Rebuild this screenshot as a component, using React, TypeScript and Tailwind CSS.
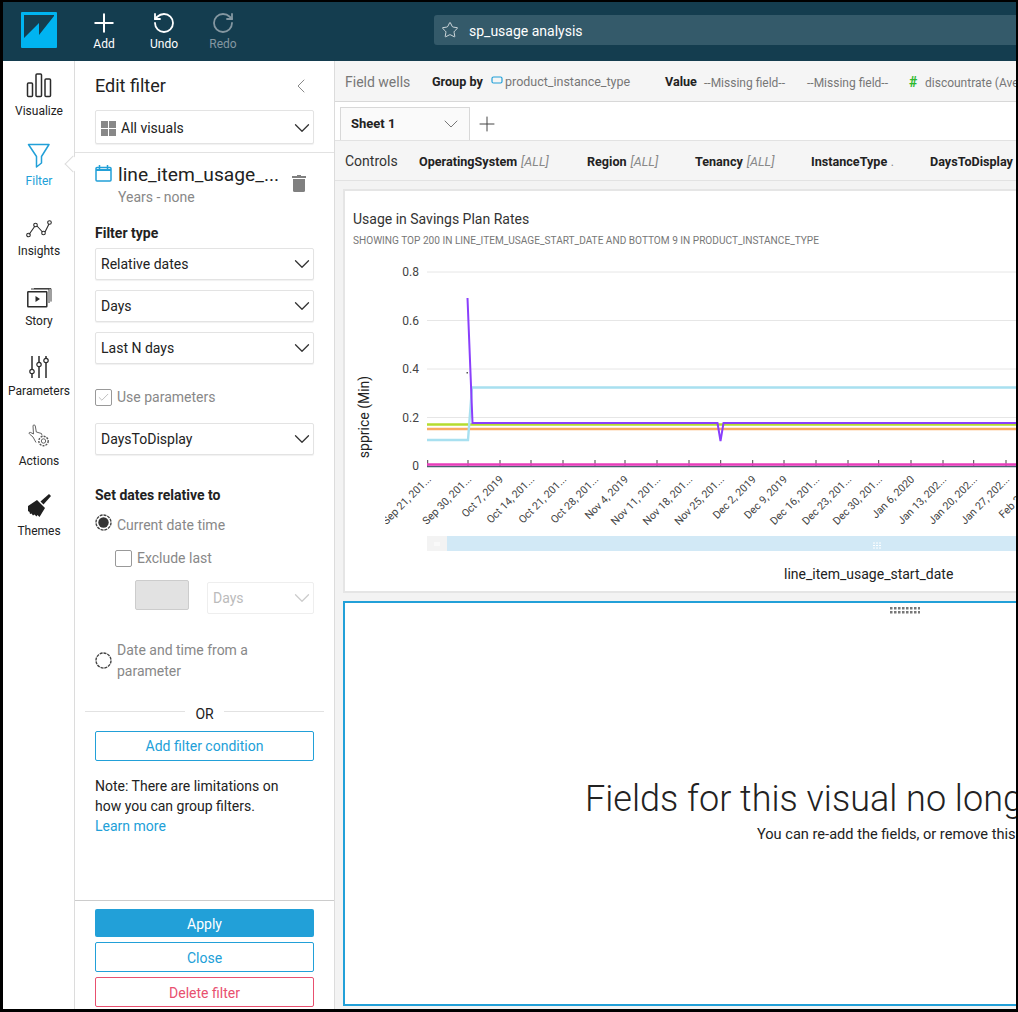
import { ChevronDown, ChevronLeft, Plus, RotateCcw, RotateCw, Star, Check } from 'lucide-react'

const FONT = 'font-[Roboto,"Noto_Sans",sans-serif]'

const ticks = [427.7, 468, 500, 531, 563, 595, 625, 657, 689, 720.7, 752.7, 784, 816, 848, 878.7, 911, 943, 973.7, 1006]
const dates = [
  'Sep 21, 201...', 'Sep 30, 201...', 'Oct 7, 2019', 'Oct 14, 201...', 'Oct 21, 201...', 'Oct 28, 201...', 'Nov 4, 2019',
  'Nov 11, 201...', 'Nov 18, 201...', 'Nov 25, 201...', 'Dec 2, 2019', 'Dec 9, 2019', 'Dec 16, 201...', 'Dec 23, 201...',
  'Dec 30, 201...', 'Jan 6, 2020', 'Jan 13, 202...', 'Jan 20, 202...', 'Jan 27, 202...', 'Feb 3, 2020',
]
const grid = [
  { y: 272, label: '0.8' },
  { y: 320.5, label: '0.6' },
  { y: 369, label: '0.4' },
  { y: 417.5, label: '0.2' },
]

function Logo() {
  return (
    <svg width="36" height="36" viewBox="0 0 36 36">
      <rect width="36" height="36" rx="1" fill="#00b4f1" />
      <path d="M3 3H33V4L18 23V11L3 26Z" fill="#143d4f" />
    </svg>
  )
}

function VisualizeIcon() {
  return (
    <svg width="26" height="25" viewBox="0 0 26 25" fill="none" stroke="#2b2b2b" strokeWidth="1.5">
      <rect x="1.5" y="10" width="5" height="13.5" rx="1" />
      <rect x="10" y="1" width="5.5" height="22.5" rx="1" />
      <rect x="19" y="6" width="5.5" height="17.5" rx="1" />
    </svg>
  )
}

function FilterIcon() {
  return (
    <svg width="24" height="25" viewBox="0 0 24 25" fill="none" stroke="#22a0d8" strokeWidth="1.5" strokeLinejoin="round">
      <path d="M1.5 1.5h20.5l-7.5 12v6.5l-5 4v-10.500z" />
    </svg>
  )
}

function InsightsIcon() {
  return (
    <svg width="26" height="18" viewBox="0 0 26 18" fill="none" stroke="#2b2b2b" strokeWidth="1.1">
      <path d="M3 14.500L9 6M11 6l5.500 6M19 12l4-8" />
      <circle cx="2.500" cy="15" r="1.800" />
      <circle cx="9.500" cy="5" r="1.800" />
      <circle cx="17.500" cy="13" r="1.800" />
      <circle cx="23.500" cy="2.500" r="1.800" />
    </svg>
  )
}

function StoryIcon() {
  return (
    <svg width="25" height="20" viewBox="0 0 25 20" fill="none" stroke="#2b2b2b" strokeWidth="1.3">
      <rect x="0.800" y="3.800" width="19" height="15" rx="0.500" strokeWidth="1.500" />
      <path d="M4 1h18v14M7 0.600h17v13" strokeWidth="0.900" />
      <path d="M8.500 8l4.500 3-4.500 3z" fill="#2b2b2b" stroke="none" />
    </svg>
  )
}

function ParametersIcon() {
  return (
    <svg width="20" height="23" viewBox="0 0 20 23" fill="none" stroke="#2b2b2b" strokeWidth="1.500">
      <path d="M3 1v13M3 19v4M10 1v6M10 12v11M17 1v2M17 8v15" />
      <circle cx="3" cy="16.500" r="2.200" strokeWidth="1.200" />
      <circle cx="10" cy="9.500" r="2.200" strokeWidth="1.200" />
      <circle cx="17" cy="5.500" r="2.200" strokeWidth="1.200" />
    </svg>
  )
}

function ActionsIcon() {
  return (
    <svg width="22" height="24" viewBox="0 0 22 24" fill="none" stroke="#555" strokeWidth="0.900">
      <path d="M5 13l-3.500-3c-1-1 0-2.200 1.200-1.500L5.500 10 5 2c0-1.500 2-1.500 2.300 0l1 6 5.200 1.500.5 2M5 13l3 5.500" />
      <circle cx="15.500" cy="17" r="4.700" strokeWidth="1.400" strokeDasharray="2 1.100" />
      <circle cx="15.500" cy="17" r="2.200" />
    </svg>
  )
}

function ThemesIcon() {
  return (
    <svg width="25" height="25" viewBox="0 0 25 25" fill="#1f1f1f">
      <path d="M22 1L24 3L16.500 11.500L13.500 8.500Z" />
      <path d="M10 7L18 15L12.500 24L10.500 22L9.500 23.500L7.500 21.500L6 22.500L4.500 20.500L3 21L2.500 19L1 18L1 13Z" />
    </svg>
  )
}

function TrashIcon() {
  return (
    <svg width="14" height="17" viewBox="0 0 14 17" fill="#808080" className="flex-none">
      <path d="M5 0h4v1h5v2H0V1h5z" />
      <path d="M1 4h12v11.500q0 1.500-1.500 1.500h-9Q1 17 1 15.500z" />
    </svg>
  )
}

function Radio({ on }: { on?: boolean }) {
  return (
    <svg width="17" height="17" viewBox="0 0 17 17" className="flex-none">
      <circle cx="8.500" cy="8.500" r="7.500" fill="none" stroke="#444" strokeWidth="1.400" strokeDasharray="3 0.900" />
      {on && <circle cx="8.500" cy="8.500" r="5.200" fill="#333" />}
    </svg>
  )
}

function RailItem({ icon, label, active }: { icon: React.ReactNode; label: string; active?: boolean }) {
  return (
    <div className="relative flex h-[70px] flex-col items-center pl-[1px]">
      <div className="flex h-[38px] items-end justify-center pb-[1px]">{icon}</div>
      <span className={`mt-[4px] text-[12px] leading-[16px] ${active ? 'text-[#22a0d8]' : 'text-[#222]'}`}>{label}</span>
    </div>
  )
}

function Select({ label, className = '', icon }: { label: string; className?: string; icon?: React.ReactNode }) {
  return (
    <div className={`flex items-center justify-between rounded-[2px] border border-[#e3e3e3] bg-white pl-[5px] text-[14px] text-[#222] shadow-[0_1px_1px_rgba(0,0,0,0.06)] ${className}`}>
      <span className="flex items-center gap-[5px]">
        {icon}
        {label}
      </span>
      <ChevronDown size={26} strokeWidth={1.2} className="-mr-[2px] flex-none text-[#333]" />
    </div>
  )
}

function Box({ className = '', children }: { className?: string; children?: React.ReactNode }) {
  return <div className={`flex-none rounded-[2px] ${className}`}>{children}</div>
}

function Panel() {
  return (
    <div className="flex w-[261px] flex-none flex-col border-l border-r border-[#dcdcdc] bg-white text-[14px]">
      <div className="flex h-[92px] flex-none flex-col border-b border-[#e2e2e2] px-5">
        <div className="flex h-[49px] flex-none items-center justify-between">
          <span className="text-[18px] text-[#222]">Edit filter</span>
          <ChevronLeft size={24} strokeWidth={1} className="mr-[1px] text-[#888]" />
        </div>
        <Select
          label="All visuals"
          className="h-[34px] pt-[2px]"
          icon={
            <span className="grid grid-cols-2 gap-[1px]">
              <i className="h-[7px] w-[7px] bg-[#888]" />
              <i className="h-[7px] w-[7px] bg-[#888]" />
              <i className="h-[7px] w-[7px] bg-[#888]" />
              <i className="h-[7px] w-[7px] bg-[#888]" />
            </span>
          }
        />
      </div>
      <div className="flex flex-1 flex-col px-5">
        <div className="mt-[11px] flex h-[22px] items-center">
          <svg width="17" height="17" viewBox="0 0 17 17" fill="none" stroke="#22a0d8" strokeWidth="1.500" className="-mt-[3px] flex-none">
            <rect x="1" y="2.500" width="15" height="13.500" rx="1" />
            <path d="M1 5h15" strokeWidth="2" />
            <path d="M4.500 0v4M12.500 0v4" />
          </svg>
          <span className="ml-[6px] mt-[1px] w-[160px] flex-none whitespace-nowrap text-[19.2px] text-[#222]">line_item_usage_...</span>
          <span className="ml-[14px] mt-[16px]"><TrashIcon /></span>
        </div>
        <div className="ml-[23px] mt-[1px] h-[20px] leading-[20px] text-[#888]">Years - none</div>
        <div className="mt-[16px] h-[20px] font-bold leading-[20px] text-[#222]">Filter type</div>
        <Select label="Relative dates" className="mt-[5px] h-[32px] flex-none" />
        <Select label="Days" className="mt-[10px] h-[32px] flex-none" />
        <Select label="Last N days" className="mt-[10px] h-[32px] flex-none" />
        <div className="mt-[25px] flex h-[17px] items-center">
          <Box className="flex h-[17px] w-[17px] items-center justify-center border border-[#999]">
            <Check size={13} strokeWidth={1} className="text-[#888]" />
          </Box>
          <span className="ml-[5px] -mt-[1px] text-[#888]">Use parameters</span>
        </div>
        <Select label="DaysToDisplay" className="mt-[17px] h-[32px] flex-none" />
        <div className="mt-[30px] h-[20px] font-bold leading-[20px] text-[#222]">Set dates relative to</div>
        <div className="mt-[9px] flex h-[17px] items-center">
          <Radio on />
          <span className="ml-[5px] mt-[6px] text-[#888]">Current date time</span>
        </div>
        <div className="ml-[20px] mt-[19px] flex h-[17px] items-center">
          <Box className="h-[17px] w-[17px] border border-[#999]" />
          <span className="ml-[5px] -mt-[1px] text-[#888]">Exclude last</span>
        </div>
        <div className="mt-[13px] flex h-[34px] items-start">
          <Box className="ml-[40px] h-[30px] w-[54px] border border-[#ccc] bg-[#e2e2e2]" />
          <div className="ml-[18px] mt-[2px] flex h-[32px] w-[107px] items-center justify-between rounded-[2px] border border-[#eee] pl-[5px] text-[#bbb]">
            Days
            <ChevronDown size={26} strokeWidth={1.2} className="-mr-[2px] flex-none text-[#ccc]" />
          </div>
        </div>
        <div className="mt-[26px] flex h-[41px] items-center">
          <Radio />
          <span className="ml-[5px] leading-[20.500px] text-[#888]">
            Date and time from a
            <br />
            parameter
          </span>
        </div>
        <div className="-mx-[10px] mt-[23px] flex h-[20px] items-center">
          <span className="-mt-[6px] h-px flex-1 bg-[#e2e2e2]" />
          <span className="mx-[10px] text-[#222]">OR</span>
          <span className="-mt-[6px] h-px flex-1 bg-[#e2e2e2]" />
        </div>
        <div className="mt-[7px] flex h-[30px] flex-none items-center justify-center rounded-[2px] border border-[#22a0d8] text-[#22a0d8]">
          Add filter condition
        </div>
        <div className="mt-[15px] leading-[20px] text-[#222]">
          Note: There are limitations on
          <br />
          how you can group filters.
          <br />
          <span className="text-[#22a0d8]">Learn more</span>
        </div>
      </div>
      <div className="flex h-[109px] flex-none flex-col border-t border-[#ccc] px-5 pt-[8px]">
        <div className="flex h-[28px] flex-none items-center justify-center rounded-[2px] bg-[#22a0d8] pt-[2px] text-white">Apply</div>
        <div className="mt-[5px] flex h-[30px] flex-none items-center justify-center rounded-[2px] border border-[#22a0d8] pt-[2px] text-[#22a0d8]">Close</div>
        <div className="mt-[5px] flex h-[30px] flex-none items-center justify-center rounded-[2px] border border-[#e8506f] pt-[2px] text-[#e8506f]">Delete filter</div>
      </div>
    </div>
  )
}

function ControlChip({ name, value, className }: { name: string; value: string; className: string }) {
  return (
    <span className={`flex-none whitespace-nowrap text-[12.6px] ${className}`}>
      <b className="font-bold text-[#222]">{name}</b>
      <i className="ml-[4px] text-[#888]">{value}</i>
    </span>
  )
}

function Chart() {
  return (
    <svg width="700" height="335" viewBox="345 255 700 335" className="mt-2 block" fontFamily="Roboto, sans-serif">
      <defs>
        <clipPath id="labels">
          <rect x="385" y="470" width="660" height="70" />
        </clipPath>
      </defs>
      {grid.map(g => (
        <g key={g.y}>
          <line x1="427" x2="1045" y1={g.y} y2={g.y} stroke="#e6e6e6" strokeWidth="1" />
          <text x="419" y={g.y + 4} textAnchor="end" fontSize="12" fill="#444">{g.label}</text>
        </g>
      ))}
      <text x="419" y="470" textAnchor="end" fontSize="12" fill="#444">0</text>
      <text transform="translate(369 417) rotate(-90)" textAnchor="middle" fontSize="14" fill="#222">spprice (Min)</text>

      {ticks.map(t => (
        <line key={t} x1={t} x2={t} y1="460" y2="466" stroke="#444" strokeWidth="1" />
      ))}

      <path d="M427 424.500H1045" stroke="#b5dc2e" strokeWidth="2.400" fill="none" />
      <path d="M427 429H1045" stroke="#f9ab63" strokeWidth="2.400" fill="none" />
      <path d="M427 440H468L472 387.500H1045" stroke="#a8e0f0" strokeWidth="2.400" fill="none" />
      <path d="M467.500 298L472.500 423H717.500L720.500 441L723.500 423H1045" stroke="#8a3ffc" strokeWidth="2" fill="none" />
      <path d="M427 466.500H1045" stroke="#4a6070" strokeWidth="1.500" fill="none" />
      <path d="M427 464.500H1045" stroke="#e83dbb" strokeWidth="2.400" fill="none" />
      <rect x="466.500" y="372" width="1.500" height="1.500" fill="#555" />

      <g clipPath="url(#labels)">
        {dates.map((d, i) => {
          const x = i < ticks.length ? ticks[i] : 1038
          return (
            <text key={d} transform={`translate(${x + 4} 480) rotate(-45)`} textAnchor="end" fontSize="10.700" fill="#444">{d}</text>
          )
        })}
      </g>

      <rect x="427" y="536" width="20" height="15" fill="#f3f3f3" />
      <rect x="447" y="536" width="600" height="15" fill="#d2e9f6" />
      <path d="M434 543h6M434 545h6" stroke="#fff" strokeWidth="1" />
      <path d="M873 543h8M873 545.500h8M873 548h8" stroke="#fff" strokeWidth="1" strokeDasharray="2 1" />

      <text x="784" y="579" fontSize="14" fill="#222">line_item_usage_start_date</text>
    </svg>
  )
}

export default function App() {
  return (
    <div className={`h-[1012px] w-[1018px] overflow-hidden bg-black pb-[3px] pl-[3px] pr-[2px] pt-[2px] ${FONT}`}>
      <div className="flex h-full flex-col overflow-hidden bg-white">
        {/* Header */}
        <header className="flex h-[59px] flex-none bg-[#143d4f] text-white">
          <div className="ml-[18px] mt-[10px]"><Logo /></div>
          <div className="ml-[27px] flex w-[40px] flex-col items-center pt-[6px]">
            <Plus size={30} strokeWidth={1.6} />
            <span className="-mt-[2px] text-[12px] leading-[16px]">Add</span>
          </div>
          <div className="ml-[20px] flex w-[40px] flex-col items-center pt-[6px]">
            <span className="flex h-[30px] items-center"><RotateCcw size={24} strokeWidth={1.8} /></span>
            <span className="-mt-[2px] text-[12px] leading-[16px]">Undo</span>
          </div>
          <div className="ml-[19px] flex w-[40px] flex-col items-center pt-[6px] text-[#8497a1]">
            <span className="flex h-[30px] items-center"><RotateCw size={24} strokeWidth={1.8} /></span>
            <span className="-mt-[2px] text-[12px] leading-[16px]">Redo</span>
          </div>
          <div className="ml-[191px] mt-[13px] flex h-[30px] flex-1 items-center rounded-l-[3px] bg-[#345a6a] pl-[7px]">
            <Star size={18} strokeWidth={1} className="flex-none" />
            <span className="ml-[10px] pt-[2px] text-[14px]">sp_usage analysis</span>
          </div>
        </header>

        <div className="flex min-h-0 flex-1">
          {/* Rail */}
          <nav className="relative w-[71px] flex-none bg-white">
            <RailItem icon={<VisualizeIcon />} label="Visualize" />
            <RailItem icon={<FilterIcon />} label="Filter" active />
            <RailItem icon={<InsightsIcon />} label="Insights" />
            <RailItem icon={<StoryIcon />} label="Story" />
            <RailItem icon={<ParametersIcon />} label="Parameters" />
            <RailItem icon={<ActionsIcon />} label="Actions" />
            <RailItem icon={<ThemesIcon />} label="Themes" />
            <span className="absolute right-[-5px] top-[97px] h-[12px] w-[12px] rotate-45 border-b border-l border-[#dcdcdc] bg-white" />
          </nav>

          <Panel />

          {/* Main */}
          <main className="flex min-w-0 flex-1 flex-col overflow-hidden bg-[#f3f3f3]">
            <div className="flex h-[41px] flex-none items-center whitespace-nowrap border-b border-[#d8d8d8] bg-[#f5f5f5] pl-[10px] pt-[3px] text-[12px] text-[#777]">
              <span className="-mt-[1px] w-[87px] flex-none text-[14px]">Field wells</span>
              <b className="w-[59px] flex-none text-[12.6px] font-bold text-[#222]">Group by</b>
              <svg width="12" height="10" viewBox="0 0 12 10" fill="none" stroke="#22a0d8" strokeWidth="1.200" className="-mt-[3px] flex-none">
                <path d="M1 2.500q0-1.500 1.500-1.500h7q1.500 0 1.500 1.500v3q0 1.500-1.500 1.500h-7Q1 7 1 5.500z" />
              </svg>
              <span className="ml-[2px] w-[160px] flex-none text-[12.5px]">product_instance_type</span>
              <b className="w-[39px] flex-none text-[12.6px] font-bold text-[#222]">Value</b>
              <span className="w-[103px] flex-none">--Missing field--</span>
              <span className="w-[102px] flex-none">--Missing field--</span>
              <span className="w-[16px] flex-none text-[14px] font-bold text-[#2db82d]">#</span>
              <span className="flex-none">discountrate (Average)</span>
            </div>
            <div className="flex h-[38px] flex-none items-end bg-white pl-[5px]">
              <div className="flex h-[33px] w-[130px] flex-none items-center justify-between border-l border-r border-t border-[#d8d8d8] bg-[#fafafa] pl-[10px] pr-[6px] text-[13px] font-bold text-[#222]">
                Sheet 1
                <ChevronDown size={24} strokeWidth={1} className="text-[#777]" />
              </div>
              <Plus size={24} strokeWidth={1} className="mb-[4px] ml-[5px] text-[#444]" />
            </div>
            <div className="flex h-[41px] flex-none items-center whitespace-nowrap border-b border-t border-[#e2e2e2] bg-[#f5f5f5] pl-[10px] pt-[3px]">
              <span className="-mt-[1px] w-[74px] flex-none text-[14px] text-[#333]">Controls</span>
              <ControlChip name="OperatingSystem" value="[ALL]" className="w-[168px]" />
              <ControlChip name="Region" value="[ALL]" className="w-[108px]" />
              <ControlChip name="Tenancy" value="[ALL]" className="w-[116px]" />
              <ControlChip name="InstanceType" value="." className="w-[119px]" />
              <ControlChip name="DaysToDisplay" value="" className="" />
            </div>
            <div className="flex flex-1 flex-col pl-[8px] pt-[8px]">
              <section className="h-[404px] w-[1000px] flex-none border-2 border-[#e5e5e5] bg-white pl-[8px] pt-[18px]">
                <div className="h-[20px] text-[14px] leading-[20px] text-[#333]">Usage in Savings Plan Rates</div>
                <div className="mt-[4px] h-[14px] pt-[1px] text-[10.1px] leading-[14px] text-[#777]">SHOWING TOP 200 IN LINE_ITEM_USAGE_START_DATE AND BOTTOM 9 IN PRODUCT_INSTANCE_TYPE</div>
                <div className="-ml-[8px]"><Chart /></div>
              </section>
              <section className="relative mt-[8px] h-[405px] w-[1000px] flex-none whitespace-nowrap border-2 border-[#22a0d8] bg-white pt-[174px]">
                <svg width="30" height="7" className="absolute left-[545px] top-[4px]">
                  {[0, 1, 2, 3, 4, 5, 6, 7].map(i => (
                    <g key={i} fill="#777">
                      <rect x={i * 4} y="0" width="2.500" height="2.500" />
                      <rect x={i * 4} y="4" width="2.500" height="2.500" />
                    </g>
                  ))}
                </svg>
                <div className="pl-[240px] text-[36px] font-light leading-[44px] text-[#222]">Fields for this visual no longer exist</div>
                <div className="mt-[3px] pl-[412px] text-[14.6px] leading-[20px] text-[#222]">You can re-add the fields, or remove this visual.</div>
              </section>
            </div>
          </main>
        </div>
      </div>
    </div>
  )
}
